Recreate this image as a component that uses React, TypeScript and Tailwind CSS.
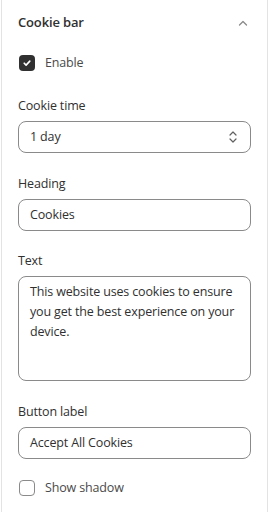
import React from 'react';

const font = { fontFamily: '"Open Sans", "Noto Sans", sans-serif' };

function Label({ children }: { children: React.ReactNode }) {
  return <div className="h-[22px] mb-1 text-[12.5px] leading-[22px] text-[#303030]">{children}</div>;
}

function Box({ children }: { children: React.ReactNode }) {
  return (
    <div className="h-8 rounded-lg border border-[#8a8a8a] bg-white px-[11px] flex items-center text-[12.5px] text-[#303030]">
      {children}
    </div>
  );
}

function Check({ on }: { on?: boolean }) {
  return on ? (
    <span className="w-4 h-4 rounded bg-[#303030] flex items-center justify-center">
      <svg width="10" height="10" viewBox="0 0 10 10" fill="none">
        <path d="M2.2 5.2l1.9 1.9 3.7-4" stroke="#fff" strokeWidth="1.6" strokeLinecap="round" strokeLinejoin="round" />
      </svg>
    </span>
  ) : (
    <span className="w-4 h-4 rounded border border-[#8a8a8a] bg-white" />
  );
}

export default function App() {
  return (
    <div className="w-[269px] h-[512px] bg-white pl-px tracking-[-0.15px]" style={font}>
      <div className="w-[267px] h-full border-x border-[#e3e3e3] px-4">
        {/* header */}
        <div className="h-[46px] flex items-center justify-between">
          <span className="text-[13px] font-semibold text-[#303030]">Cookie bar</span>
          <svg width="10" height="6" viewBox="0 0 10 6" fill="none" className="mr-[3px]">
            <path d="M1.5 5L5 1.5 8.5 5" stroke="#8a8a8a" strokeWidth="1.3" strokeLinecap="round" strokeLinejoin="round" />
          </svg>
        </div>

        <div className="mt-[7px] h-5 flex items-center gap-[10px] text-[12.5px] text-[#4a4a4a] pl-px">
          <Check on />
          <span>Enable</span>
        </div>

        <div className="mt-[22px] flex flex-col gap-5">
          <div>
            <Label>Cookie time</Label>
            <Box>
              <span className="flex-1">1 day</span>
              <svg width="8" height="12" viewBox="0 0 8 12" fill="none" className="mr-[2px]">
                <path d="M1 4L4 1 7 4M1 8l3 3 3-3" stroke="#616161" strokeWidth="1.2" strokeLinecap="round" strokeLinejoin="round" />
              </svg>
            </Box>
          </div>
          <div>
            <Label>Heading</Label>
            <Box>Cookies</Box>
          </div>
          <div className="-mt-px">
            <Label>Text</Label>
            <div className="h-[105px] rounded-lg border border-[#8a8a8a] bg-white px-[11px] pt-[5px] text-[12.5px] leading-5 text-[#303030] whitespace-nowrap">
              This website uses cookies to ensure
              <br />
              you get the best experience on your
              <br />
              device.
            </div>
          </div>
          <div>
            <Label>Button label</Label>
            <Box>Accept All Cookies</Box>
          </div>
          <div className="-mt-px h-5 flex items-center gap-[10px] text-[12.5px] text-[#4a4a4a] pl-px">
            <Check />
            <span>Show shadow</span>
          </div>
        </div>
      </div>
    </div>
  );
}
